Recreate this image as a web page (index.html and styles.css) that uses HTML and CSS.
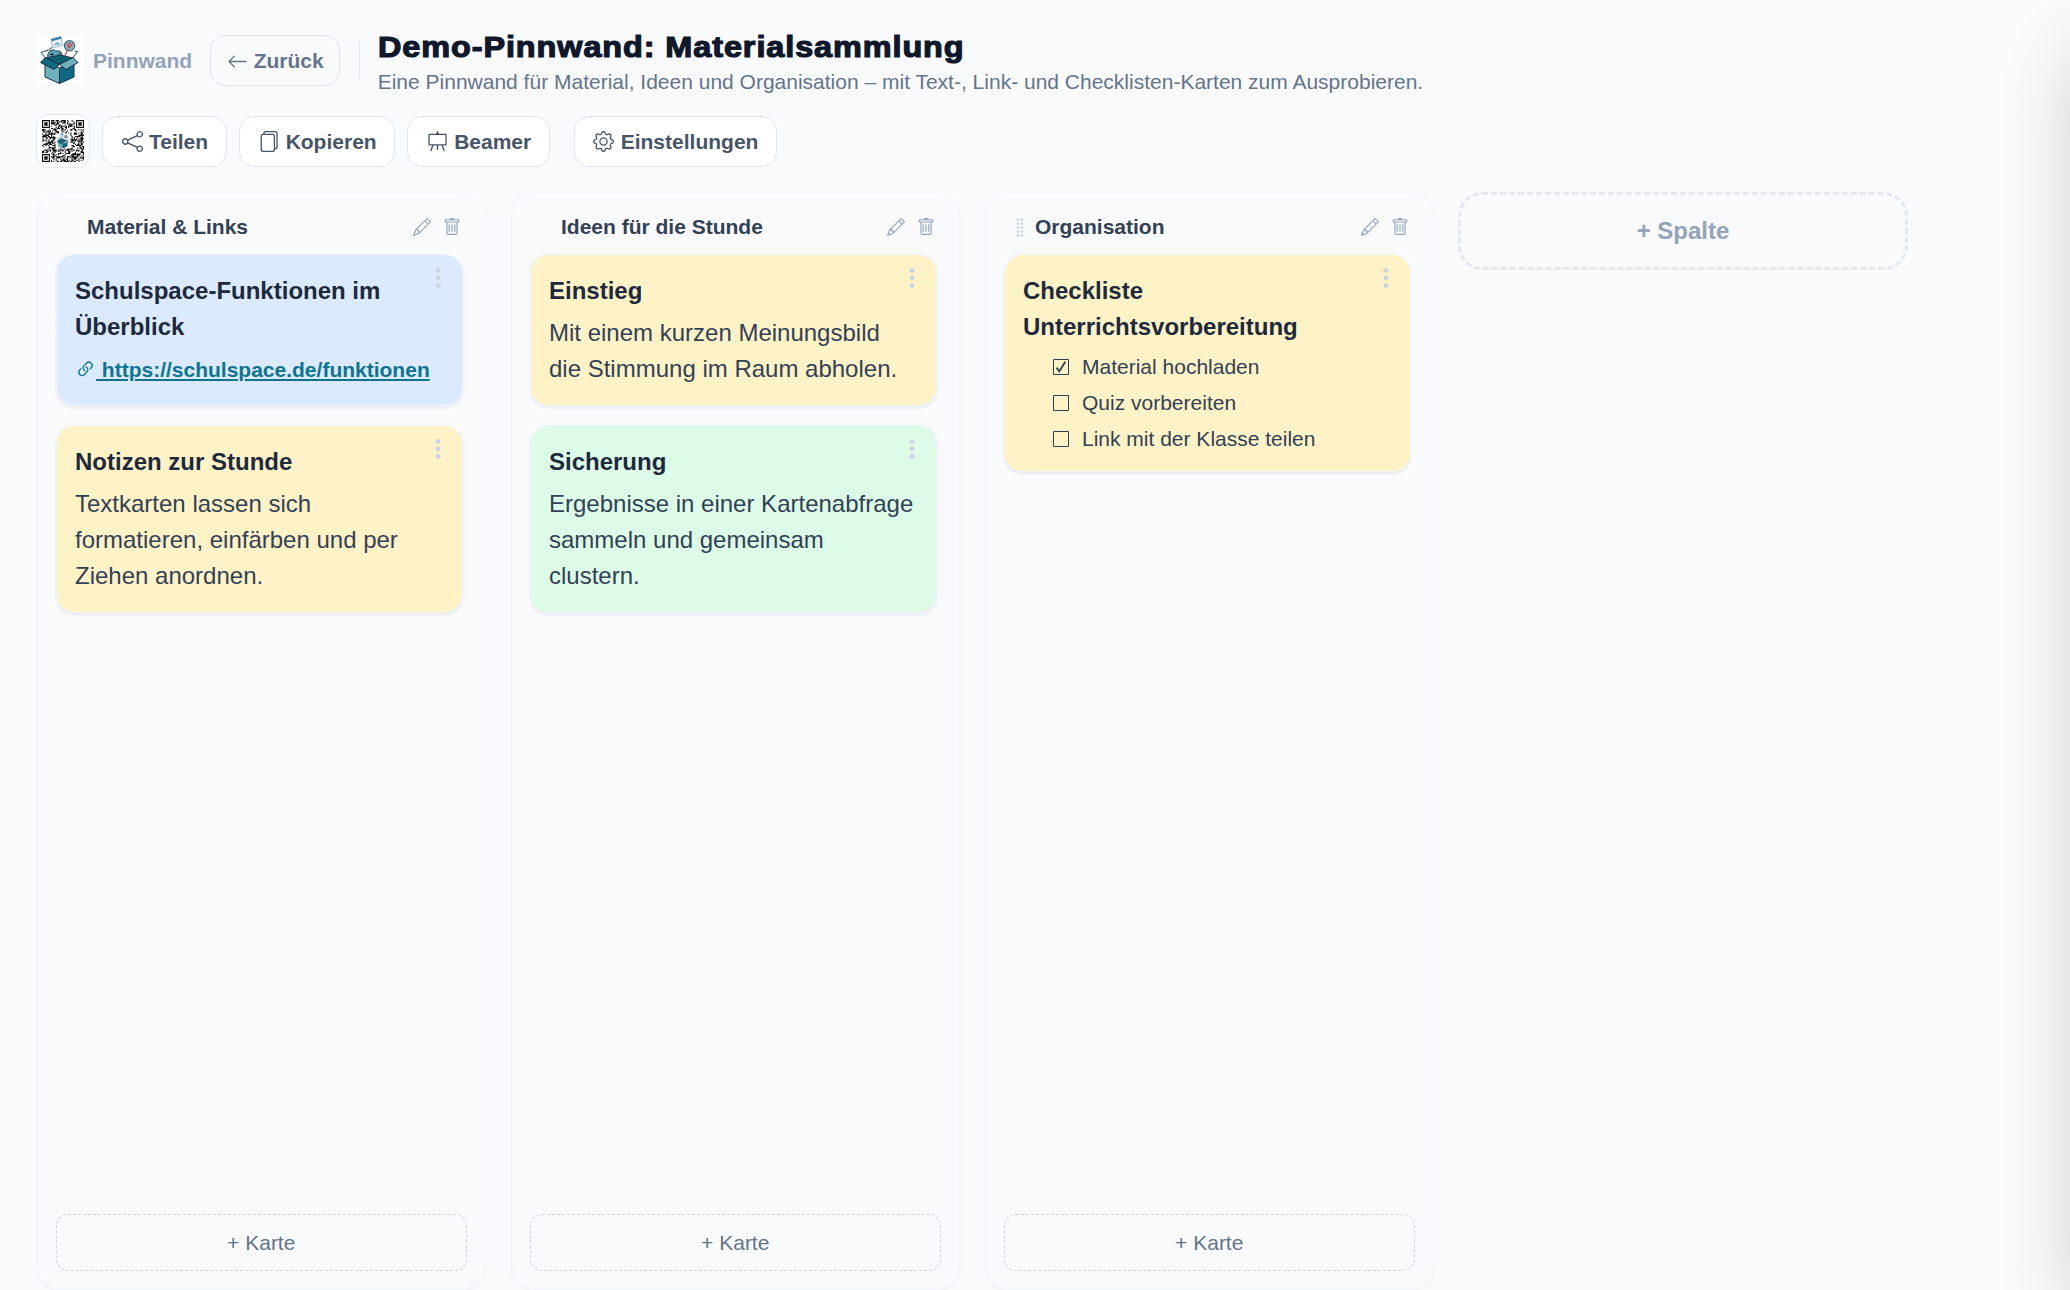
FILE: index.html
```html
<!DOCTYPE html>
<html lang="de">
<head>
<meta charset="utf-8">
<title>Demo-Pinnwand: Materialsammlung</title>
<link rel="stylesheet" href="styles.css">
</head>
<body>
<svg class="sprite" aria-hidden="true">
  <symbol id="i-arrow" viewBox="0 0 16 16"><path d="M15 8a.5.5 0 0 0-.5-.5H2.707l3.147-3.146a.5.5 0 1 0-.708-.708l-4 4a.5.5 0 0 0 0 .708l4 4a.5.5 0 0 0 .708-.708L2.707 8.5H14.5A.5.5 0 0 0 15 8z"/></symbol>
  <symbol id="i-share" viewBox="0 0 16 16"><path d="M13.5 1a1.5 1.5 0 1 0 0 3 1.5 1.5 0 0 0 0-3zM11 2.5a2.5 2.5 0 1 1 .603 1.628l-6.718 3.12a2.499 2.499 0 0 1 0 1.504l6.718 3.12a2.5 2.5 0 1 1-.488.876l-6.718-3.12a2.5 2.5 0 1 1 0-3.256l6.718-3.12A2.5 2.5 0 0 1 11 2.5zm-8.5 4a1.5 1.5 0 1 0 0 3 1.5 1.5 0 0 0 0-3zm11 5.5a1.5 1.5 0 1 0 0 3 1.5 1.5 0 0 0 0-3z"/></symbol>
  <symbol id="i-files" viewBox="0 0 16 16"><path d="M13 0H6a2 2 0 0 0-2 2 2 2 0 0 0-2 2v10a2 2 0 0 0 2 2h7a2 2 0 0 0 2-2 2 2 0 0 0 2-2V2a2 2 0 0 0-2-2zm0 13V4a2 2 0 0 0-2-2H5a1 1 0 0 1 1-1h7a1 1 0 0 1 1 1v10a1 1 0 0 1-1 1zM3 4a1 1 0 0 1 1-1h7a1 1 0 0 1 1 1v10a1 1 0 0 1-1 1H4a1 1 0 0 1-1-1V4z"/></symbol>
  <symbol id="i-easel" viewBox="0 0 16 16"><path d="M8 0a.5.5 0 0 1 .473.337L9.046 2H14a1 1 0 0 1 1 1v7a1 1 0 0 1-1 1h-1.85l1.323 3.837a.5.5 0 1 1-.946.326L11.092 11H8.5v3a.5.5 0 0 1-1 0v-3H4.908l-1.435 4.163a.5.5 0 1 1-.946-.326L3.85 11H2a1 1 0 0 1-1-1V3a1 1 0 0 1 1-1h4.954L7.527.337A.5.5 0 0 1 8 0zM2 3v7h12V3H2z"/></symbol>
  <symbol id="i-gear" viewBox="0 0 16 16"><path d="M8 4.754a3.246 3.246 0 1 0 0 6.492 3.246 3.246 0 0 0 0-6.492zM5.754 8a2.246 2.246 0 1 1 4.492 0 2.246 2.246 0 0 1-4.492 0z"/><path d="M9.796 1.343c-.527-1.79-3.065-1.79-3.592 0l-.094.319a.873.873 0 0 1-1.255.52l-.292-.16c-1.64-.892-3.433.902-2.54 2.541l.159.292a.873.873 0 0 1-.52 1.255l-.319.094c-1.79.527-1.79 3.065 0 3.592l.319.094a.873.873 0 0 1 .52 1.255l-.16.292c-.892 1.64.901 3.434 2.541 2.54l.292-.159a.873.873 0 0 1 1.255.52l.094.319c.527 1.79 3.065 1.79 3.592 0l.094-.319a.873.873 0 0 1 1.255-.52l.292.16c1.64.893 3.434-.902 2.54-2.541l-.159-.292a.873.873 0 0 1 .52-1.255l.319-.094c1.79-.527 1.79-3.065 0-3.592l-.319-.094a.873.873 0 0 1-.52-1.255l.16-.292c.893-1.64-.902-3.433-2.541-2.54l-.292.159a.873.873 0 0 1-1.255-.52l-.094-.319zm-2.633.283c.246-.835 1.428-.835 1.674 0l.094.319a1.873 1.873 0 0 0 2.693 1.115l.291-.16c.764-.415 1.6.42 1.184 1.185l-.159.292a1.873 1.873 0 0 0 1.116 2.692l.318.094c.835.246.835 1.428 0 1.674l-.319.094a1.873 1.873 0 0 0-1.115 2.693l.16.291c.415.764-.42 1.6-1.185 1.184l-.291-.159a1.873 1.873 0 0 0-2.693 1.116l-.094.318c-.246.835-1.428.835-1.674 0l-.094-.319a1.873 1.873 0 0 0-2.692-1.115l-.292.16c-.764.415-1.6-.42-1.184-1.185l.159-.291A1.873 1.873 0 0 0 1.945 8.93l-.319-.094c-.835-.246-.835-1.428 0-1.674l.319-.094A1.873 1.873 0 0 0 3.06 4.377l-.16-.292c-.415-.764.42-1.6 1.185-1.184l.292.159a1.873 1.873 0 0 0 2.692-1.115l.094-.319z"/></symbol>
  <symbol id="i-pencil" viewBox="0 0 16 16"><path d="M12.146.146a.5.5 0 0 1 .708 0l3 3a.5.5 0 0 1 0 .708l-10 10a.5.5 0 0 1-.168.11l-5 2a.5.5 0 0 1-.65-.65l2-5a.5.5 0 0 1 .11-.168l10-10zM11.207 2.5 13.5 4.793 14.793 3.5 12.5 1.207 11.207 2.5zm1.586 3L10.5 3.207 4 9.707V10h.5a.5.5 0 0 1 .5.5v.5h.5a.5.5 0 0 1 .5.5v.5h.293l6.5-6.5zm-9.761 5.175-.106.106-1.528 3.821 3.821-1.528.106-.106A.5.5 0 0 1 5 12.5V12h-.5a.5.5 0 0 1-.5-.5V11h-.5a.5.5 0 0 1-.468-.325z"/></symbol>
  <symbol id="i-trash" viewBox="0 0 16 16"><path d="M5.500 5.500A.5.5 0 0 1 6 6v6a.5.5 0 0 1-1 0V6a.5.5 0 0 1 .5-.5zm2.500 0a.5.5 0 0 1 .5.5v6a.5.5 0 0 1-1 0V6a.5.5 0 0 1 .5-.5zm3 .5a.5.5 0 0 0-1 0v6a.5.5 0 0 0 1 0V6z"/><path fill-rule="evenodd" d="M14.500 3a1 1 0 0 1-1 1H13v9a2 2 0 0 1-2 2H5a2 2 0 0 1-2-2V4h-.5a1 1 0 0 1-1-1V2a1 1 0 0 1 1-1H6a1 1 0 0 1 1-1h2a1 1 0 0 1 1 1h3.500a1 1 0 0 1 1 1v1zM4.118 4 4 4.059V13a1 1 0 0 0 1 1h6a1 1 0 0 0 1-1V4.059L11.882 4H4.118zM2.500 3V2h11v1h-11z"/></symbol>
  <symbol id="i-link" viewBox="0 0 16 16"><path d="M4.715 6.542 3.343 7.914a3 3 0 1 0 4.243 4.243l1.828-1.829A3 3 0 0 0 8.586 5.5L8 6.086a1.002 1.002 0 0 0-.154.199 2 2 0 0 1 .861 3.337L6.88 11.45a2 2 0 1 1-2.83-2.83l.793-.792a4.018 4.018 0 0 1-.128-1.287z"/><path d="M6.586 4.672A3 3 0 0 0 7.414 9.5l.775-.776a2 2 0 0 1-.896-3.346L9.12 3.55a2 2 0 1 1 2.83 2.83l-.793.792c.112.42.155.855.128 1.287l1.372-1.372a3 3 0 1 0-4.243-4.243L6.586 4.672z"/></symbol>
  <symbol id="i-dots" viewBox="0 0 16 16"><circle cx="8" cy="3" r="1.6"/><circle cx="8" cy="8" r="1.6"/><circle cx="8" cy="13" r="1.6"/></symbol>
  <symbol id="i-grip" viewBox="0 0 16 16"><circle cx="6" cy="2" r="1"/><circle cx="9" cy="2" r="1"/><circle cx="6" cy="5" r="1"/><circle cx="9" cy="5" r="1"/><circle cx="6" cy="8" r="1"/><circle cx="9" cy="8" r="1"/><circle cx="6" cy="11" r="1"/><circle cx="9" cy="11" r="1"/><circle cx="6" cy="14" r="1"/><circle cx="9" cy="14" r="1"/></symbol>
  <symbol id="i-box" viewBox="0 0 16 16"><path fill="none" stroke="currentColor" d="M.5.5h15v15H.5z"/></symbol>
  <symbol id="i-checked" viewBox="0 0 16 16"><path fill="none" stroke="currentColor" d="M.5.5h15v15H.5z"/><path fill="none" stroke="currentColor" stroke-width="1.900" d="M3.600 8.600 6.300 12.400 12.300 2.800"/></symbol>
  <symbol id="logo" viewBox="0 0 48 48">
    <rect width="48" height="48" rx="3" fill="#fdfdfd"/>
    <path fill="#fff" stroke="#23415a" stroke-width="1" d="M10 23 5 16.500 12.500 14M36 23l5.500-7.500-3-.5M12.500 14l4-3"/>
    <path fill="#e4f0f6" stroke="#8fb0c4" stroke-width=".8" d="m15 3 10-2.500 1.500 9L16.500 12z"/>
    <path fill="#2f7fae" d="m15.200 3 9.800-2.400.4 2.200-9.800 2.400z"/>
    <path stroke="#5c9cc0" fill="#8fb9cf" d="m18 9.500 3-3 3 2"/>
    <circle cx="33.500" cy="9.800" r="5.200" fill="#7fb3bd" stroke="#23415a" stroke-width=".9"/>
    <path fill="none" stroke="#c8585c" stroke-width="1.300" d="M30.500 7.500 33 12M36.500 7.500 33 12M33.500 6v6M31.500 13l-2.500 7"/>
    <path fill="#5fa3b3" stroke="#1d4560" stroke-width="1" d="M12 22c-1-4 1-7.500 4-8 2-.4 3 1 5 1s3.500-.5 4.500 2c1 2.500.8 5-.5 7l-13 .5z"/>
    <path stroke="#143a52" d="M14 18.500h4M16 16.500v4M22 18h2"/>
    <path fill="#0f5f73" stroke="#16324a" stroke-width="1" d="m10 22 13 6 14-6-13-3z"/>
    <path fill="#6fb1ba" stroke="#16324a" stroke-width="1" d="M9 25.500 23.500 32v15.500L9 41z"/>
    <path fill="#0d6a80" stroke="#16324a" stroke-width="1" d="M38 25.500 23.500 32v15.500L38 41z"/>
    <path fill="#0d6a80" stroke="#16324a" stroke-width="1" d="m9.500 21.500-5 5L18 33.500l5.500-5z"/>
    <path fill="#6fb1ba" stroke="#16324a" stroke-width="1" d="m37 21.500 5 5L30 33.500l-6.500-5z"/>
  </symbol>
</svg>

<header class="top">
  <div class="brand-row">
    <svg class="logo"><use href="#logo"/></svg>
    <span class="brand">Pinnwand</span>
    <button class="btn back"><svg class="ico"><use href="#i-arrow"/></svg>Zurück</button>
    <span class="divider"></span>
    <div class="heading">
      <h1>Demo-Pinnwand: Materialsammlung</h1>
      <p>Eine Pinnwand für Material, Ideen und Organisation – mit Text-, Link- und Checklisten-Karten zum Ausprobieren.</p>
    </div>
  </div>
  <div class="tools">
    <div class="qr"><svg viewBox="0 0 37 37" id="qr"></svg></div>
    <button class="btn"><svg class="ico"><use href="#i-share"/></svg>Teilen</button>
    <button class="btn"><svg class="ico"><use href="#i-files"/></svg>Kopieren</button>
    <button class="btn"><svg class="ico"><use href="#i-easel"/></svg>Beamer</button>
    <button class="btn settings"><svg class="ico"><use href="#i-gear"/></svg>Einstellungen</button>
  </div>
</header>

<main class="board">
  <section class="column">
    <div class="col-head"><span class="grip"></span><h2>Material &amp; Links</h2><svg class="act"><use href="#i-pencil"/></svg><svg class="act"><use href="#i-trash"/></svg></div>
    <div class="cards">
      <article class="card blue">
        <svg class="more"><use href="#i-dots"/></svg>
        <h3>Schulspace-Funktionen im Überblick</h3>
        <p class="link"><a href="#"><svg class="link-ico"><use href="#i-link"/></svg> https://schulspace.de/funktionen</a></p>
      </article>
      <article class="card yellow">
        <svg class="more"><use href="#i-dots"/></svg>
        <h3>Notizen zur Stunde</h3>
        <p>Textkarten lassen sich formatieren, einfärben und per Ziehen anordnen.</p>
      </article>
    </div>
    <button class="add-card">+ Karte</button>
  </section>

  <section class="column">
    <div class="col-head"><span class="grip"></span><h2>Ideen für die Stunde</h2><svg class="act"><use href="#i-pencil"/></svg><svg class="act"><use href="#i-trash"/></svg></div>
    <div class="cards">
      <article class="card yellow">
        <svg class="more"><use href="#i-dots"/></svg>
        <h3>Einstieg</h3>
        <p>Mit einem kurzen Meinungsbild die Stimmung im Raum abholen.</p>
      </article>
      <article class="card green">
        <svg class="more"><use href="#i-dots"/></svg>
        <h3>Sicherung</h3>
        <p>Ergebnisse in einer Kartenabfrage sammeln und gemeinsam clustern.</p>
      </article>
    </div>
    <button class="add-card">+ Karte</button>
  </section>

  <section class="column">
    <div class="col-head"><svg class="grip"><use href="#i-grip"/></svg><h2>Organisation</h2><svg class="act"><use href="#i-pencil"/></svg><svg class="act"><use href="#i-trash"/></svg></div>
    <div class="cards">
      <article class="card yellow checklist">
        <svg class="more"><use href="#i-dots"/></svg>
        <h3>Checkliste Unterrichtsvorbereitung</h3>
        <ul>
          <li><svg class="check"><use href="#i-checked"/></svg>Material hochladen</li>
          <li><svg class="check"><use href="#i-box"/></svg>Quiz vorbereiten</li>
          <li><svg class="check"><use href="#i-box"/></svg>Link mit der Klasse teilen</li>
        </ul>
      </article>
    </div>
    <button class="add-card">+ Karte</button>
  </section>

  <button class="add-column">+ Spalte</button>
</main>
<div class="overlay"><aside class="drawer"></aside></div>
<script src="qr.js"></script>
</body>
</html>
```
FILE: styles.css
```css
* { box-sizing: border-box; }
html, body { margin: 0; height: 100%; }
body {
  display: flex;
  flex-direction: column;
  overflow: hidden;
  background: #f9fafc;
  color: #334155;
  font-family: "Liberation Sans", Arial, sans-serif;
  font-size: 21px;
}
h1, h2, h3, p, ul { margin: 0; padding: 0; }
button { font: inherit; color: inherit; }
svg { fill: currentColor; flex: none; }
.sprite { position: absolute; width: 0; height: 0; }

.top { padding: 27px 36px 0; }
.brand-row { display: flex; align-items: center; height: 66px; }
.logo { width: 48px; height: 48px; }
.brand { margin-left: 9px; padding-top: 2px; color: #94a3b8; font-weight: 700; }
.btn {
  display: flex;
  align-items: center;
  gap: 6.5px;
  height: 51px;
  padding: 1px 17.5px 0 18.5px;
  border: 1px solid #dfe6ef;
  border-radius: 15px;
  background: #fff;
  color: #475569;
  font-weight: 700;
  white-space: nowrap;
}
.ico { width: 21px; height: 21px; }
.back { gap: 6px; margin-left: 18px; padding: 2px 15px 0 15.5px; background: transparent; color: #64748b; }
.divider { width: 1px; height: 36px; margin: 0 18px 0 19px; background: #e2e8f0; }
.heading { display: flex; flex-direction: column; padding-top: 4px; }
h1 {
  color: #0f172a;
  font-size: 30px;
  line-height: 37px;
  font-weight: 800;
  letter-spacing: .85px;
  -webkit-text-stroke: 1.2px #0f172a;
  white-space: nowrap;
  transform: scaleX(1.08);
  transform-origin: left;
}
.heading p { color: #64748b; font-size: 21px; line-height: 34px; margin-bottom: -2px; white-space: nowrap; }

.tools { display: flex; align-items: center; gap: 12px; margin-top: 21px; height: 54px; }
.qr {
  width: 54px;
  height: 54px;
  padding: 5px;
  border: 1px solid #e2e8f0;
  border-radius: 12px;
  background: #fff;
}
.qr svg { display: block; width: 42px; height: 42px; }
.settings { margin-left: 12px; }

.board { display: flex; align-items: flex-start; gap: 25px; flex: 1; padding: 24px 36px 0 37px; min-height: 0; }
.column {
  display: flex;
  flex-direction: column;
  flex: none;
  width: 449px;
  height: 1098px;
  padding: 19px 18.5px 18px 18px;
  border: 1px solid #f1f5f9;
  border-radius: 24px;
  box-shadow: 0 1.5px 3px rgba(15, 23, 42, .03);
}
.col-head { display: flex; align-items: center; height: 30px; margin-bottom: 12px; padding-right: 6px; color: #94a3b8; }
.grip { width: 21px; height: 21px; margin: 0 4.5px 0 5.5px; color: #cbd5e1; }
h2 { flex: 1; color: #334155; font-size: 21px; font-weight: 700; }
.act { width: 18px; height: 18px; margin-left: 12px; }
.cards { display: flex; flex: 1; flex-direction: column; gap: 19px; padding-right: 3.5px; }
.card {
  position: relative;
  padding: 18px 20px 18px 18px;
  border: 1px solid #f1f5f9;
  border-radius: 18px;
  background-clip: padding-box;
  box-shadow: 0 1.5px 3px rgba(15, 23, 42, .07);
  font-size: 24px;
  line-height: 36px;
}
.blue { background-color: #dbeafe; }
.yellow { background-color: #fef3c7; }
.green { background-color: #dcfce7; }
.card h3 { margin-right: 24px; color: #1e293b; font-size: 24px; font-weight: 700; }
.card p { margin-top: 6px; }
.card .link { height: 36px; }
.more { position: absolute; top: 11px; right: 12px; width: 24px; height: 24px; color: #cbd5e1; }
.card a { color: #0e7490; font-size: 21px; font-weight: 700; text-underline-offset: 2px; text-decoration-thickness: 1.5px; }
.link-ico { display: inline-block; width: 21px; height: 21px; vertical-align: -.125em; }
.card.checklist { padding-bottom: 14px; }
.checklist ul { margin-top: 4px; padding-left: 29px; list-style: none; font-size: 21px; }
.checklist li { display: flex; align-items: center; gap: 13px; }
.check { width: 16px; height: 16px; margin-left: 1px; }
.add-card {
  height: 57px;
  border: 1px dashed #cbd5e1;
  border-radius: 12px;
  background: transparent;
  color: #64748b;
}
.add-column {
  flex: none;
  width: 450px;
  height: 78px;
  margin-left: -1px;
  border: 3px dashed #e2e8f0;
  border-radius: 24px;
  background: transparent;
  color: #94a3b8;
  font-size: 24px;
  font-weight: 700;
}
.overlay { position: absolute; inset: 0; overflow: hidden; pointer-events: none; }
.drawer {
  position: absolute;
  top: 0;
  left: 100%;
  width: 600px;
  height: 100%;
  box-shadow: 0 37.5px 75px -18px rgba(0, 0, 0, .25);
}
```
FILE: qr.js
```js
(function () {
  var n = 37, seed = 4711, d = "";
  function rand() {
    seed = (seed * 1103515245 + 12345) % 2147483648;
    return seed / 2147483648;
  }
  for (var y = 0; y < n; y++) {
    for (var x = 0; x < n; x++) {
      var on = rand() < 0.5;
      var corner = (x < 8 && y < 8) || (x > n - 9 && y < 8) || (x < 8 && y > n - 9);
      var middle = Math.abs(x - 18) < 7 && Math.abs(y - 18) < 7;
      if (on && !corner && !middle) d += "M" + x + " " + y + "h1v1h-1z";
    }
  }
  [[0, 0], [n - 7, 0], [0, n - 7]].forEach(function (p) {
    d += "M" + p[0] + " " + p[1] + "h7v7h-7zm1 1v5h5v-5zm1 1h3v3h-3z";
  });
  document.getElementById("qr").innerHTML =
    '<path fill="#111" d="' + d + '"/><use href="#logo" x="12" y="12" width="13" height="13"/>';
})();
```
